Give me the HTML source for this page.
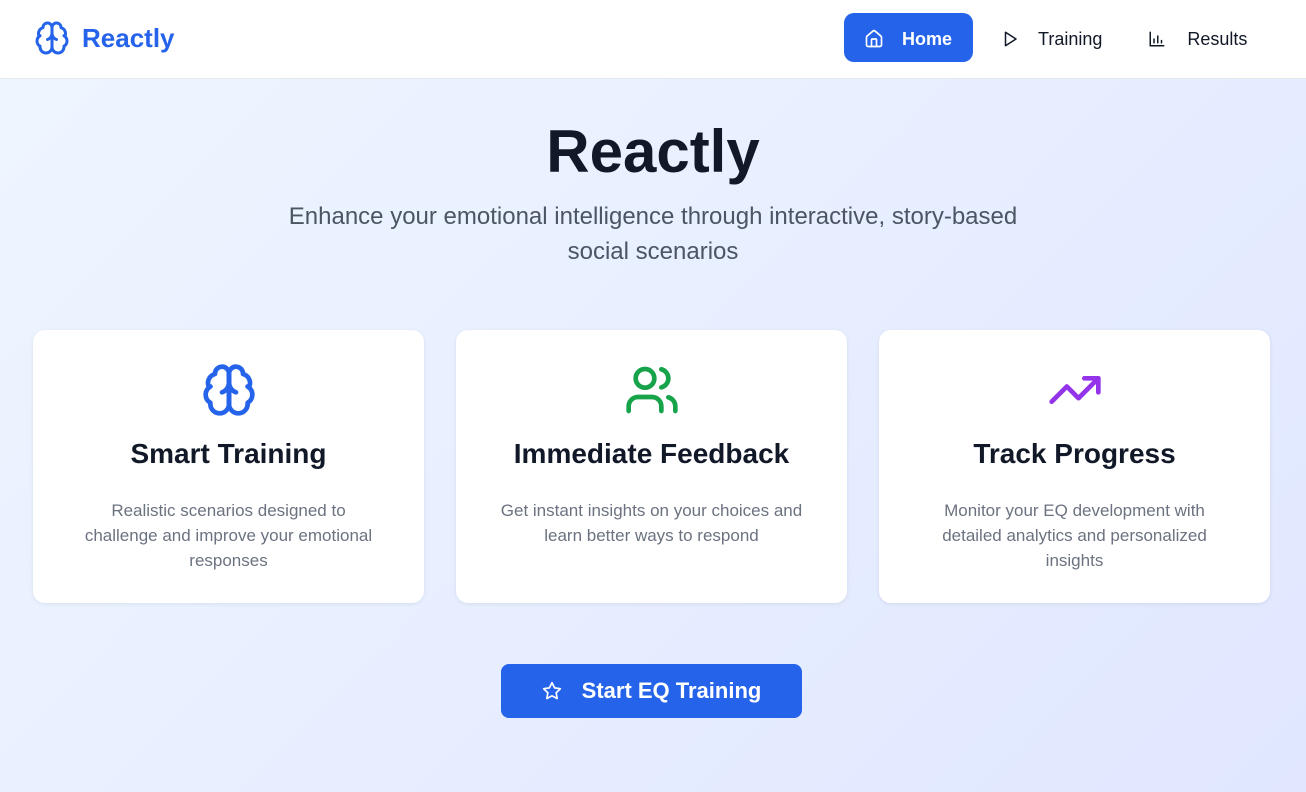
<!DOCTYPE html>
<html><head><meta charset="utf-8"><style>
*{box-sizing:border-box;margin:0;padding:0}
body{width:1306px;height:792px;overflow:hidden;font-family:"Liberation Sans",sans-serif;background:linear-gradient(135deg,#eff6ff,#e0e7ff);}
header{height:79px;background:#fff;border-bottom:1px solid #e5e7eb;position:relative}
.logo{position:absolute;left:34px;top:20px;display:flex;align-items:center}
.logo span{font-size:26px;font-weight:bold;color:#2563eb;margin-left:12px}
.nav{position:absolute;top:13px;left:844px;display:flex;align-items:center}
.nav a{display:flex;align-items:center;height:49px;font-size:18px;color:#111827;text-decoration:none;padding-top:3px}
.home{background:#2563eb;color:#fff!important;border-radius:10px;width:129px;padding-left:20px;font-weight:bold}
.home svg{margin-right:18px}
h1{text-align:center;font-size:60px;font-weight:bold;color:#111827;margin-top:38px;line-height:70px}
.sub{text-align:center;font-size:24px;color:#4b5563;line-height:35px;width:780px;margin:12px auto 0}
.cards{position:absolute;top:330px;left:33px;display:flex;gap:32px}
.card{width:391px;height:273px;background:#fff;border-radius:12px;box-shadow:0 1px 4px rgba(0,0,0,.08);text-align:center;padding-top:32px}
.card h3{font-size:28px;font-weight:bold;color:#111827;margin-top:13px;line-height:36px}
.card p{font-size:17px;color:#6b7280;line-height:25px;margin:26px auto 0;width:306px}
.btn{position:absolute;left:501px;top:664px;width:301px;height:54px;background:#2563eb;border-radius:8px;color:#fff;font-size:22px;font-weight:600;display:flex;align-items:center;justify-content:center}
.btn svg{margin-right:20px}
</style></head><body>
<header>
<div class="logo"><svg width="36" height="36" viewBox="0 0 24 24" fill="none" stroke="#2563eb" stroke-width="2" stroke-linecap="round" stroke-linejoin="round"><path d="M12 5a3 3 0 1 0-5.997.125 4 4 0 0 0-2.526 5.77 4 4 0 0 0 .556 6.588A4 4 0 1 0 12 18Z"/><path d="M12 5a3 3 0 1 1 5.997.125 4 4 0 0 1 2.526 5.77 4 4 0 0 1-.556 6.588A4 4 0 1 1 12 18Z"/><path d="M15 13a4.5 4.5 0 0 1-3-4 4.5 4.5 0 0 1-3 4"/><path d="M12 5v13"/><path d="M3.477 10.896a4 4 0 0 1 .585-.396"/><path d="M19.938 10.5a4 4 0 0 1 .585.396"/></svg><span>Reactly</span></div>
<div class="nav">
<a class="home"><svg width="20" height="20" viewBox="0 0 24 24" fill="none" stroke="#fff" stroke-width="2" stroke-linecap="round" stroke-linejoin="round"><path d="M15 21v-8a1 1 0 0 0-1-1h-4a1 1 0 0 0-1 1v8"/><path d="M3 10a2 2 0 0 1 .709-1.528l7-5.999a2 2 0 0 1 2.582 0l7 5.999A2 2 0 0 1 21 10v9a2 2 0 0 1-2 2H5a2 2 0 0 1-2-2z"/></svg>Home</a>
<a style="margin-left:28px"><svg width="18" height="18" viewBox="0 0 24 24" fill="none" stroke="#111827" stroke-width="2" stroke-linejoin="round"><path d="M6 3l14 9-14 9z"/></svg><span style="margin-left:19px">Training</span></a>
<a style="margin-left:46px"><svg width="18" height="18" viewBox="0 0 24 24" fill="none" stroke="#111827" stroke-width="2" stroke-linecap="round"><path d="M3 3v18h18"/><path d="M8 17v-5M13 17V8M18 17v-3"/></svg><span style="margin-left:21px">Results</span></a>
</div>
</header>
<h1>Reactly</h1>
<div class="sub">Enhance your emotional intelligence through interactive, story-based social scenarios</div>
<div class="cards">
<div class="card"><svg width="56" height="56" viewBox="0 0 24 24" fill="none" stroke="#2563eb" stroke-width="2" stroke-linecap="round" stroke-linejoin="round"><path d="M12 5a3 3 0 1 0-5.997.125 4 4 0 0 0-2.526 5.77 4 4 0 0 0 .556 6.588A4 4 0 1 0 12 18Z"/><path d="M12 5a3 3 0 1 1 5.997.125 4 4 0 0 1 2.526 5.77 4 4 0 0 1-.556 6.588A4 4 0 1 1 12 18Z"/><path d="M15 13a4.5 4.5 0 0 1-3-4 4.5 4.5 0 0 1-3 4"/><path d="M12 5v13"/><path d="M3.477 10.896a4 4 0 0 1 .585-.396"/><path d="M19.938 10.5a4 4 0 0 1 .585.396"/></svg><h3>Smart Training</h3><p>Realistic scenarios designed to challenge and improve your emotional responses</p></div>
<div class="card"><svg width="56" height="56" viewBox="0 0 24 24" fill="none" stroke="#16a34a" stroke-width="2" stroke-linecap="round" stroke-linejoin="round"><path d="M16 21v-2a4 4 0 0 0-4-4H6a4 4 0 0 0-4 4v2"/><circle cx="9" cy="7" r="4"/><path d="M22 21v-2a4 4 0 0 0-3-3.87"/><path d="M16 3.13a4 4 0 0 1 0 7.750"/></svg><h3>Immediate Feedback</h3><p>Get instant insights on your choices and learn better ways to respond</p></div>
<div class="card"><svg width="56" height="56" viewBox="0 0 24 24" fill="none" stroke="#9333ea" stroke-width="2" stroke-linecap="round" stroke-linejoin="round"><path d="M22 7l-8.5 8.5-5-5L2 17"/><path d="M16 7h6v6"/></svg><h3>Track Progress</h3><p>Monitor your EQ development with detailed analytics and personalized insights</p></div>
</div>
<div class="btn"><svg width="20" height="20" viewBox="0 0 24 24" fill="none" stroke="#fff" stroke-width="2" stroke-linejoin="round"><path d="M12 2l3.09 6.26L22 9.27l-5 4.87 1.18 6.88L12 17.77l-6.18 3.25L7 14.14 2 9.27l6.91-1.01z"/></svg>Start EQ Training</div>
</body></html>
